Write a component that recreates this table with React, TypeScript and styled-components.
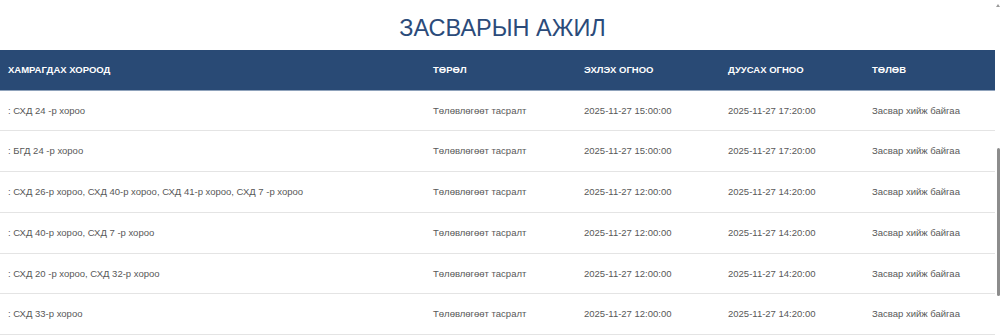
import styled, { createGlobalStyle } from 'styled-components';

const GlobalStyle = createGlobalStyle`
    html, body {
        margin: 0;
        padding: 0;
        background: #ffffff;
        font-family: "Liberation Sans", Arial, sans-serif;
        overflow: hidden;
    }
`;

const Page = styled.div`
    display: flex;
    width: 1000px;
    height: 336px;
    overflow: hidden;
`;

const Content = styled.div`
    flex: 1;
    min-width: 0;
`;

const Title = styled.h2`
    margin: 0;
    padding: 14px 0 7px 10px;
    text-align: center;
    font-size: 23.5px;
    font-weight: 400;
    line-height: 29px;
    color: #2b4b7a;
`;

const Table = styled.table`
    width: 100%;
    border-collapse: collapse;
    table-layout: fixed;
    font-size: 9.5px;
    line-height: 15.7px;
`;

const HeadCell = styled.th<{ $w?: number }>`
    width: ${p => (p.$w ? `${p.$w - 16}px` : 'auto')};
    background: #294a75;
    color: #ffffff;
    font-weight: 700;
    text-align: left;
    padding: 12px 8px;
    border-bottom: 1px solid #8fa2bb;
`;

const Cell = styled.td`
    padding: 12px 8px;
    color: #585858;
    border-bottom: 1px solid #e4e4e4;
    white-space: nowrap;
`;

const Track = styled.div`
    width: 5px;
    display: flex;
    flex-direction: column;
    align-items: flex-end;
`;

const Arrow = styled.div`
    margin-top: 4px;
    width: 0;
    height: 0;
    border-left: 2px solid transparent;
    border-right: 2px solid transparent;
    border-bottom: 3px solid #9a9a9a;
`;

const Thumb = styled.div`
    margin-top: 141px;
    width: 3px;
    height: 148px;
    border-radius: 2px;
    background: #8c8c8c;
`;

type Row = { area: string; start: string; end: string };

const rows: Row[] = [
    { area: ': СХД 24 -р хороо', start: '2025-11-27 15:00:00', end: '2025-11-27 17:20:00' },
    { area: ': БГД 24 -р хороо', start: '2025-11-27 15:00:00', end: '2025-11-27 17:20:00' },
    { area: ': СХД 26-р хороо, СХД 40-р хороо, СХД 41-р хороо, СХД 7 -р хороо', start: '2025-11-27 12:00:00', end: '2025-11-27 14:20:00' },
    { area: ': СХД 40-р хороо, СХД 7 -р хороо', start: '2025-11-27 12:00:00', end: '2025-11-27 14:20:00' },
    { area: ': СХД 20 -р хороо, СХД 32-р хороо', start: '2025-11-27 12:00:00', end: '2025-11-27 14:20:00' },
    { area: ': СХД 33-р хороо', start: '2025-11-27 12:00:00', end: '2025-11-27 14:20:00' },
];

function App() {
    return (
        <Page>
            <GlobalStyle />
            <Content>
                <Title>ЗАСВАРЫН АЖИЛ</Title>
                <Table>
                    <thead>
                        <tr>
                            <HeadCell $w={425}>ХАМРАГДАХ ХОРООД</HeadCell>
                            <HeadCell $w={151}>ТӨРӨЛ</HeadCell>
                            <HeadCell $w={144}>ЭХЛЭХ ОГНОО</HeadCell>
                            <HeadCell $w={144}>ДУУСАХ ОГНОО</HeadCell>
                            <HeadCell>ТӨЛӨВ</HeadCell>
                        </tr>
                    </thead>
                    <tbody>
                        {rows.map((r, i) => (
                            <tr key={i}>
                                <Cell>{r.area}</Cell>
                                <Cell>Төлөвлөгөөт тасралт</Cell>
                                <Cell>{r.start}</Cell>
                                <Cell>{r.end}</Cell>
                                <Cell>Засвар хийж байгаа</Cell>
                            </tr>
                        ))}
                    </tbody>
                </Table>
            </Content>
            <Track>
                <Arrow />
                <Thumb />
            </Track>
        </Page>
    );
}

export default App;
